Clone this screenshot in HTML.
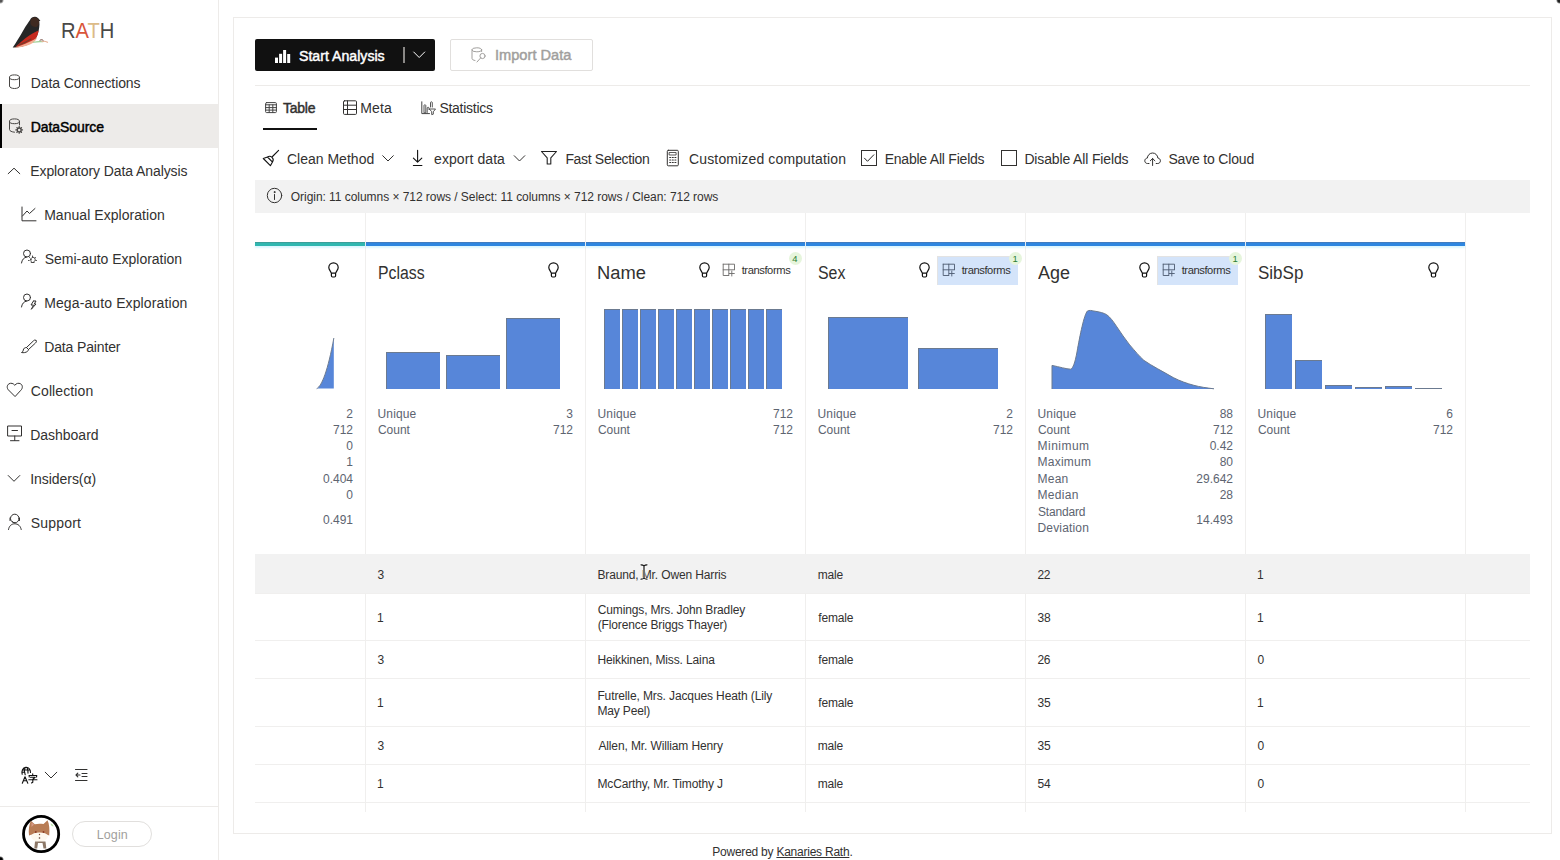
<!DOCTYPE html>
<html><head><meta charset="utf-8"><title>RATH</title>
<style>
html,body{margin:0;padding:0;width:1560px;height:860px;overflow:hidden;background:#fff;}
body{position:relative;font-family:"Liberation Sans",sans-serif;}
.t{position:absolute;line-height:1;white-space:nowrap;}
.r{position:absolute;box-sizing:content-box;}
svg.r{display:block}
</style></head><body>
<div class="r" style="left:-3px;top:-3px;width:7px;height:7px;border-radius:50%;background:radial-gradient(circle,#555 0,#555 30%,rgba(85,85,85,0) 70%);"></div>
<div class="r" style="left:1556px;top:-3px;width:7px;height:7px;border-radius:50%;background:radial-gradient(circle,#222 0,#222 35%,rgba(34,34,34,0) 70%);"></div>
<div class="r" style="left:-3px;top:856px;width:7px;height:7px;border-radius:50%;background:radial-gradient(circle,#000 0,#000 35%,rgba(0,0,0,0) 70%);"></div>
<div class="r" style="left:218px;top:0px;width:1px;height:860px;background:#edebe9;"></div>
<svg class="r" style="left:0px;top:0px;overflow:visible;" width="60" height="60" viewBox="0.00 0.00 60 60" fill="none" stroke="#323130" stroke-width="1" stroke-linecap="round" stroke-linejoin="round">
<path d="M12.7 47.5 C16 43 20 36 23.5 30 C26.5 25 28.5 22 30 20 C31 17.8 33 16.7 35 16.8 C37 17 38.5 18 39.2 19.6 L40.4 20.6 L39.2 21.3 C39.6 23.3 39.6 25.5 39.2 27.5 C38.7 31 37.8 35 35.8 38.5 C33 42.5 28 45.2 22 46.6 C18 47.4 15 47.6 12.7 47.5 Z" fill="#262626" stroke="none"/>
<path d="M30.5 20.5 C31.5 18 33.5 17.2 35.5 17.4 C37.5 17.8 38.8 19 39 21 C39.5 23.5 38.5 26 36.5 27 C34 27.5 31.5 26 30.5 24 Z" fill="#3f2a20" stroke="none"/>
<path d="M15.5 46.8 C19 43.5 24 39 30 35 C33.5 32.8 36.5 31.3 38.6 30.6 C38.2 33.8 37.2 36.5 35.6 38.7 C32.5 42.5 27.5 45.2 21 46.7 Z" fill="#c62a1f" stroke="none"/>
<path d="M14 47.6 C19 46.5 24 44.5 29 42 C33 40 36 38.5 37.2 37.2 C36.5 40 34 42.5 30 44.5 C25.5 46.5 20 47.6 14 47.6 Z" fill="#f3ae93" stroke="none"/>
<path d="M19 45 C24 43 28 41 31 39" stroke="#7a3a2a" stroke-width="1.2"/>
<path d="M33.5 42.3 C37 41.6 40 41.4 43 41.8" stroke="#9ccf95" stroke-width="1.1"/>
<path d="M42 41.5 C44 41 46 41.4 47.5 42.3" stroke="#e9b59a" stroke-width="1.2"/>
<path d="M40 40.2 C41 39.5 42.5 39.6 43.2 40.4" stroke="#6a3a30" stroke-width="1"/>
</svg>
<div class="t" style="left:61.26px;top:21.25px;font-size:21.5px;color:#323130;transform:scaleX(0.9368);transform-origin:0 0;"><span style="color:#4a4948">R</span><span style="color:#d9553a">A</span><span style="color:#dcbb88">T</span><span style="color:#4a4948">H</span></div>
<div class="r" style="left:0px;top:104px;width:218px;height:44px;background:#edebe9;"></div>
<div class="r" style="left:0px;top:104px;width:2px;height:44px;background:#000;"></div>
<div class="t" style="left:30.68px;top:76.00px;font-size:14px;color:#323130;letter-spacing:-0.095px;">Data Connections</div>
<div class="t" style="left:30.27px;top:164.00px;font-size:14px;color:#323130;letter-spacing:-0.095px;">Exploratory Data Analysis</div>
<div class="t" style="left:44.17px;top:208.00px;font-size:14px;color:#323130;letter-spacing:0.049px;">Manual Exploration</div>
<div class="t" style="left:44.67px;top:252.00px;font-size:14px;color:#323130;letter-spacing:-0.013px;">Semi-auto Exploration</div>
<div class="t" style="left:44.17px;top:296.00px;font-size:14px;color:#323130;letter-spacing:0.116px;">Mega-auto Exploration</div>
<div class="t" style="left:44.17px;top:340.00px;font-size:14px;color:#323130;letter-spacing:-0.136px;">Data Painter</div>
<div class="t" style="left:30.77px;top:384.00px;font-size:14px;color:#323130;letter-spacing:0.111px;">Collection</div>
<div class="t" style="left:30.27px;top:428.00px;font-size:14px;color:#323130;letter-spacing:-0.025px;">Dashboard</div>
<div class="t" style="left:30.15px;top:472.00px;font-size:14px;color:#323130;letter-spacing:-0.037px;">Insiders(α)</div>
<div class="t" style="left:30.77px;top:516.00px;font-size:14px;color:#323130;letter-spacing:0.188px;">Support</div>
<div class="t" style="left:30.68px;top:120.00px;font-size:14px;color:#000;-webkit-text-stroke:0.45px #000;letter-spacing:-0.061px;">DataSource</div>
<svg class="r" style="left:9px;top:74px;overflow:visible;" width="12" height="15" viewBox="0.00 0.00 12 15" fill="none" stroke="#484644" stroke-width="1" stroke-linecap="round" stroke-linejoin="round"><ellipse cx="5.5" cy="3.3" rx="5" ry="2.4"/><path d="M0.5 3.3 V12 C0.5 13.5 2.8 14.5 5.5 14.5 C8.2 14.5 10.5 13.5 10.5 12 V3.3"/></svg>
<svg class="r" style="left:9px;top:118px;overflow:visible;" width="15" height="16" viewBox="0.00 0.00 15 16" fill="none" stroke="#484644" stroke-width="1" stroke-linecap="round" stroke-linejoin="round"><ellipse cx="5.5" cy="3.3" rx="5" ry="2.4"/><path d="M0.5 3.3 V11.5 C0.5 13 2.8 14 5.5 14.2 M10.5 3.3 V7"/><circle cx="10.2" cy="11.9" r="1.9" stroke-width="1.3"/><path d="M10.2 8.6 V9.4 M10.2 14.4 V15.2 M6.9 11.9 H7.7 M12.7 11.9 H13.5 M7.9 9.6 L8.4 10.1 M12 13.7 L12.5 14.2 M12.5 9.6 L12 10.1 M8.4 13.7 L7.9 14.2" stroke-width="1.3"/></svg>
<svg class="r" style="left:7px;top:167px;overflow:visible;" width="14" height="8" viewBox="-0.50 0.00 14 8" fill="none" stroke="#323130" stroke-width="1" stroke-linecap="round" stroke-linejoin="round"><path d="M0.7 6.7 L6.5 1.2 L12.3 6.7"/></svg>
<svg class="r" style="left:21px;top:206px;overflow:visible;" width="16" height="15" viewBox="0.00 -0.50 16 15" fill="none" stroke="#323130" stroke-width="1" stroke-linecap="round" stroke-linejoin="round"><path d="M1 0.5 V14.3 H15"/><path d="M1.5 9.5 L6 4.5 L8.5 7 L14 2"/></svg>
<svg class="r" style="left:20px;top:249px;overflow:visible;" width="18" height="16" viewBox="-0.50 -0.50 18 16" fill="none" stroke="#323130" stroke-width="1" stroke-linecap="round" stroke-linejoin="round"><circle cx="6.5" cy="4" r="3.5"/><path d="M1 13.5 C1.5 10 3.5 8 6 7.6"/><path d="M10.3 10 a2.2 2.2 0 1 1 3.4 1.8 V13 h-3 v-1.2 a2.2 2.2 0 0 1 -0.4 -1.8z M12 6.5 v0.8 M9 8 l0.5 0.5 M15 8 l-0.5 0.5 M8 11 h0.7 M15.3 11 h0.7" stroke-width="0.9"/></svg>
<svg class="r" style="left:20px;top:293px;overflow:visible;" width="18" height="18" viewBox="-0.50 -0.50 18 18" fill="none" stroke="#323130" stroke-width="1" stroke-linecap="round" stroke-linejoin="round"><circle cx="6.5" cy="4" r="3.5"/><path d="M1 13.5 C1.5 10 3.5 8 6 7.6"/><path d="M13 7.5 L10.5 11.5 H13 L11 15.5 M13 7.5 H15.5 L13.8 10.5 H15.5 L11 15.5" stroke-width="1"/></svg>
<svg class="r" style="left:20px;top:339px;overflow:visible;" width="17" height="15" viewBox="-0.50 0.00 17 15" fill="none" stroke="#323130" stroke-width="1" stroke-linecap="round" stroke-linejoin="round"><path d="M15.5 1.5 C16.3 2.3 16 3 15 4 L8 10.5 L6 8.5 L13 1.8 C14 0.8 14.8 0.8 15.5 1.5Z"/><path d="M6 8.5 C4 8.5 3 9.5 2.8 11 C2.6 12.5 1.8 13.2 1 13.5 C3 14 5.5 13.5 6.8 12.5 C7.8 11.7 8 11 8 10.5"/></svg>
<svg class="r" style="left:6px;top:382px;overflow:visible;" width="17" height="15" viewBox="-0.50 -0.50 17 15" fill="none" stroke="#323130" stroke-width="1" stroke-linecap="round" stroke-linejoin="round"><path d="M8.3 13.8 L2 7.5 C0 5.5 0.5 2.5 2.5 1.3 C4.5 0.2 6.8 0.8 8.3 2.8 C9.8 0.8 12.1 0.2 14.1 1.3 C16.1 2.5 16.6 5.5 14.6 7.5 Z"/></svg>
<svg class="r" style="left:7px;top:425px;overflow:visible;" width="16" height="16" viewBox="0.00 -0.50 16 16" fill="none" stroke="#323130" stroke-width="1" stroke-linecap="round" stroke-linejoin="round"><rect x="1" y="0.5" width="13.5" height="10"/><path d="M5 5 H10.5 M7.75 10.5 V15 M3.5 15.2 H12"/></svg>
<svg class="r" style="left:7px;top:474px;overflow:visible;" width="14" height="8" viewBox="-0.50 -0.50 14 8" fill="none" stroke="#323130" stroke-width="1" stroke-linecap="round" stroke-linejoin="round"><path d="M0.7 1 L6.5 6.8 L12.3 1"/></svg>
<svg class="r" style="left:7px;top:512px;overflow:visible;" width="16" height="18" viewBox="-0.50 -0.50 16 18" fill="none" stroke="#323130" stroke-width="1" stroke-linecap="round" stroke-linejoin="round"><circle cx="7.3" cy="6" r="4.3"/><path d="M2.5 5.5 V8 M12 5.5 V8 M7 10.2 C5.5 10.2 5 9.5 5 9"/><path d="M1 17 C1.5 13.5 4 11.3 7.3 11.3 C10.6 11.3 13.1 13.5 13.7 17"/></svg>
<svg class="r" style="left:20px;top:766px;overflow:visible;" width="18" height="18" viewBox="0.00 0.00 18 18" fill="none" stroke="#323130" stroke-width="1" stroke-linecap="round" stroke-linejoin="round"><path d="M2.2 8.3 C1.3 5 2.7 1.8 5.8 1.4 C8.9 1.1 10.6 3.6 10.5 6.5 M2.3 4 H10 M5 1.8 C4.2 3.5 4.2 6 5.2 8.8 M7 1.6 C8 3.3 8.3 5.2 8 7.2 M2 6.2 H4.8" stroke-width="1.1" stroke="#111"/><path d="M2.3 17.3 L5 10.8 L7.8 17.3 M3.4 14.8 H6.8" stroke-width="1.1" stroke="#111"/><path d="M9 9.5 H16.8 M12.7 7.8 V9.5 M9.2 9.5 V11 M16.6 9.5 V11 M10.5 11.3 H15.2 L12.8 13.2 V16.2 L11.5 17 M8.8 13.8 H17" stroke-width="1.1" stroke="#111"/></svg>
<svg class="r" style="left:44px;top:771px;overflow:visible;" width="14" height="8" viewBox="0.00 0.00 14 8" fill="none" stroke="#323130" stroke-width="1" stroke-linecap="round" stroke-linejoin="round"><path d="M1.2 1.2 L7 7 L12.8 1.2"/></svg>
<svg class="r" style="left:74px;top:768px;overflow:visible;" width="14" height="14" viewBox="0.00 0.00 14 14" fill="none" stroke="#323130" stroke-width="1" stroke-linecap="round" stroke-linejoin="round"><path d="M1.5 1.5 H13 M1.5 12.5 H13 M8 5.5 H13 M8 8.5 H13 M2 7 H6 M3.8 5.2 L2 7 L3.8 8.8" stroke-width="1.1"/></svg>
<div class="r" style="left:0px;top:806px;width:218px;height:1px;background:#edebe9;"></div>
<svg class="r" style="left:21px;top:814px;overflow:visible;" width="40" height="40" viewBox="0.00 0.00 40 40" fill="none" stroke="#323130" stroke-width="1" stroke-linecap="round" stroke-linejoin="round">
<circle cx="20.1" cy="20" r="17.6" fill="#fff" stroke="#000" stroke-width="2.8"/>
<path d="M8 21.5 C7.3 16 8.2 11 9.8 6.8 L13.8 10.2 C16.5 9.5 19.5 9.5 22.5 10 L26.5 6.2 C28.3 10 28.8 15 28.2 21.5 C26 20.5 23 19.5 18.5 19.5 C14 19.5 10.5 20.5 8 21.5 Z" fill="#b87c55" stroke="none"/>
<path d="M10.5 8.5 L13 10.5 L10.5 13Z" fill="#d99a8a" stroke="none"/>
<path d="M10 22 C11 19.5 14 18.5 18.5 18.5 C23 18.5 26 19.5 27 22 C26.5 25.5 23 27.5 18.5 27.5 C14 27.5 10.5 25.5 10 22 Z" fill="#fdf8ee" stroke="none"/>
<circle cx="14.8" cy="18" r="0.9" fill="#8a3a25" stroke="none"/>
<circle cx="22.5" cy="18" r="0.9" fill="#8a3a25" stroke="none"/>
<circle cx="18.5" cy="20.5" r="0.7" fill="#7a4a35" stroke="none"/>
<circle cx="18.5" cy="24" r="0.8" fill="#5a3a30" stroke="none"/>
<path d="M14 27.5 L13.3 34.5 H16.2 L17 29 H21.5 L22.5 34.5 H25.3 L24.5 27.5 Z" fill="#8c7868" stroke="none"/>
<path d="M29.5 9.5 C31 9.5 32.5 11 32.5 12.5 C31 12.5 29.8 11.2 29.5 9.5Z" fill="#b9e3a8" stroke="none"/>
</svg>
<div class="r" style="left:72px;top:821px;width:78px;height:24px;border:1px solid #e1dfdd;border-radius:13px;"></div>
<div class="t" style="left:96.70px;top:828.75px;font-size:12.5px;color:#a19f9d;letter-spacing:0.138px;">Login</div>
<div class="r" style="left:233px;top:17px;width:1317px;height:815px;border:1px solid #edebe9;"></div>
<div class="r" style="left:255px;top:39px;width:180px;height:32px;background:#111111;border-radius:2px;"></div>
<svg class="r" style="left:275px;top:49px;overflow:visible;" width="16" height="15" viewBox="0.00 0.00 16 15" fill="none" stroke="#323130" stroke-width="1" stroke-linecap="round" stroke-linejoin="round"><rect x="0" y="8.6" width="3" height="5.4" fill="#fff" stroke="none"/><rect x="4.1" y="4.8" width="3" height="9.2" fill="#fff" stroke="none"/><rect x="8.1" y="1" width="3" height="13" fill="#fff" stroke="none"/><rect x="12.2" y="5" width="3" height="9" fill="#fff" stroke="none"/></svg>
<div class="t" style="left:298.77px;top:49.00px;font-size:14px;color:#fff;-webkit-text-stroke:0.45px #fff;transform:scaleX(1.0101);transform-origin:0 0;">Start Analysis</div>
<div class="r" style="left:403px;top:47px;width:2px;height:16px;background:#8a8886;"></div>
<svg class="r" style="left:413px;top:51px;overflow:visible;" width="14" height="8" viewBox="0.00 0.00 14 8" fill="none" stroke="#323130" stroke-width="1" stroke-linecap="round" stroke-linejoin="round"><path d="M0.7 1 L6.2 6.5 L11.7 1" stroke="#fff"/></svg>
<div class="r" style="left:450px;top:39px;width:141px;height:30px;border:1px solid #e1dfdd;border-radius:2px;"></div>
<svg class="r" style="left:471px;top:47px;overflow:visible;" width="16" height="17" viewBox="-0.50 0.00 16 17" fill="none" stroke="#a19f9d" stroke-width="1" stroke-linecap="round" stroke-linejoin="round"><ellipse cx="5.3" cy="2.8" rx="4.8" ry="2"/><path d="M0.5 2.8 V11.5 C0.5 12.5 2 13.3 3.5 13.5 M10.1 2.8 V4.5"/><circle cx="11" cy="9" r="2.6"/><path d="M9.2 10.9 L5.5 15"/></svg>
<div class="t" style="left:494.69px;top:48.00px;font-size:14px;color:#a19f9d;-webkit-text-stroke:0.45px #a19f9d;transform:scaleX(1.0444);transform-origin:0 0;">Import Data</div>
<div class="r" style="left:255px;top:85px;width:1275px;height:1px;background:#edebe9;"></div>
<svg class="r" style="left:265px;top:102px;overflow:visible;" width="12" height="11" viewBox="0.00 0.00 12 11" fill="none" stroke="#444" stroke-width="1" stroke-linecap="round" stroke-linejoin="round"><rect x="0.6" y="0.6" width="10.8" height="10" rx="1"/><path d="M0.6 2.8 H11.4 M0.6 5.6 H11.4 M0.6 8.1 H11.4 M4.2 2.8 V10.6 M7.8 2.8 V10.6" stroke-width="1"/></svg>
<div class="t" style="left:283.05px;top:101.00px;font-size:14px;color:#323130;-webkit-text-stroke:0.45px #323130;letter-spacing:-0.263px;">Table</div>
<div class="r" style="left:263px;top:128px;width:54px;height:2px;background:#111;"></div>
<svg class="r" style="left:343px;top:100px;overflow:visible;" width="15" height="15" viewBox="0.00 0.00 15 15" fill="none" stroke="#323130" stroke-width="1" stroke-linecap="round" stroke-linejoin="round"><rect x="0.5" y="0.8" width="13" height="13.6" rx="1"/><path d="M0.5 5.2 H13.5 M0.5 9.5 H13.5 M4.5 0.8 V14.4"/></svg>
<div class="t" style="left:360.18px;top:101.00px;font-size:14px;color:#323130;letter-spacing:0.192px;">Meta</div>
<svg class="r" style="left:421px;top:101px;overflow:visible;" width="16" height="15" viewBox="0.00 0.00 16 15" fill="none" stroke="#444" stroke-width="1" stroke-linecap="round" stroke-linejoin="round"><path d="M0.8 0.8 V12.6 H8.5"/><path d="M3 11.5 V4.5 C3 3.5 4.8 3.5 4.8 4.5 V11.5 Z M6.2 11.5 V7 C6.2 6 8 6 8 7 V8.5 M9.5 6 V1.5 C9.5 0.6 11.3 0.6 11.3 1.5 V6" stroke-width="0.9"/><path d="M8.5 8 H14.5 L12.3 10.8 V13.2 L10.7 13.6 V10.8 Z" stroke-width="0.9"/></svg>
<div class="t" style="left:439.38px;top:101.00px;font-size:14px;color:#323130;letter-spacing:-0.264px;">Statistics</div>
<svg class="r" style="left:262px;top:149px;overflow:visible;" width="18" height="18" viewBox="0.00 0.00 18 18" fill="none" stroke="#323130" stroke-width="1" stroke-linecap="round" stroke-linejoin="round"><path d="M1.3 9.5 L5.5 8 A3.6 3.6 0 0 1 10.5 13 L8.4 16.7 Z M5.5 8 L10.3 12.8 M10.5 7.5 L16.6 1.4" stroke="#111" stroke-width="1.1"/></svg>
<div class="t" style="left:286.88px;top:152.00px;font-size:14px;color:#323130;letter-spacing:0.016px;">Clean Method</div>
<svg class="r" style="left:382px;top:155px;overflow:visible;" width="13" height="8" viewBox="0.00 0.00 13 8" fill="none" stroke="#323130" stroke-width="1" stroke-linecap="round" stroke-linejoin="round"><path d="M0.7 0.7 L6 6 L11.3 0.7"/></svg>
<svg class="r" style="left:412px;top:149px;overflow:visible;" width="12" height="18" viewBox="0.00 0.00 12 18" fill="none" stroke="#323130" stroke-width="1" stroke-linecap="round" stroke-linejoin="round"><path d="M5.6 1.2 V13 M1.4 9.2 L5.6 13.2 L9.8 9.2 M1.4 16.5 H9.9" stroke="#111" stroke-width="1.1"/></svg>
<div class="t" style="left:434.07px;top:152.00px;font-size:14px;color:#323130;letter-spacing:0.080px;">export data</div>
<svg class="r" style="left:513px;top:155px;overflow:visible;" width="13" height="8" viewBox="-0.50 0.00 13 8" fill="none" stroke="#323130" stroke-width="1" stroke-linecap="round" stroke-linejoin="round"><path d="M0.7 0.7 L6 6 L11.3 0.7"/></svg>
<svg class="r" style="left:540px;top:150px;overflow:visible;" width="18" height="17" viewBox="0.00 0.00 18 17" fill="none" stroke="#323130" stroke-width="1" stroke-linecap="round" stroke-linejoin="round"><path d="M1.5 1.5 H16.5 L10.8 7.8 V14 H7.2 V7.8 Z" stroke="#222" stroke-width="1.1"/></svg>
<div class="t" style="left:565.38px;top:152.00px;font-size:14px;color:#323130;letter-spacing:-0.325px;">Fast Selection</div>
<svg class="r" style="left:666px;top:149px;overflow:visible;" width="13" height="17" viewBox="-0.50 -0.50 13 17" fill="none" stroke="#323130" stroke-width="1" stroke-linecap="round" stroke-linejoin="round"><rect x="0.8" y="0.8" width="11" height="15.5" rx="1"/><rect x="3" y="3" width="6.6" height="2.5" stroke-width="0.8"/><path d="M3.2 8 h1 M5.8 8 h1 M8.4 8 h1 M3.2 10.5 h1 M5.8 10.5 h1 M8.4 10.5 h1 M3.2 13 h1 M5.8 13 h1 M8.4 13 h1" stroke-width="1.1"/></svg>
<div class="t" style="left:689.08px;top:152.00px;font-size:14px;color:#323130;letter-spacing:0.133px;">Customized computation</div>
<svg class="r" style="left:861px;top:150px;overflow:visible;" width="17" height="17" viewBox="0.00 0.00 17 17" fill="none" stroke="#323130" stroke-width="1" stroke-linecap="round" stroke-linejoin="round"><rect x="0.5" y="0.5" width="15" height="15" stroke-linejoin="miter"/><path d="M3.5 8.2 L6.5 11.3 L12.8 4.8" stroke="#222"/></svg>
<div class="t" style="left:884.67px;top:152.00px;font-size:14px;color:#323130;letter-spacing:-0.223px;">Enable All Fields</div>
<svg class="r" style="left:1001px;top:150px;overflow:visible;" width="17" height="17" viewBox="0.00 0.00 17 17" fill="none" stroke="#323130" stroke-width="1" stroke-linecap="round" stroke-linejoin="round"><rect x="0.5" y="0.5" width="15" height="15" stroke-linejoin="miter"/></svg>
<div class="t" style="left:1024.38px;top:152.00px;font-size:14px;color:#323130;letter-spacing:-0.141px;">Disable All Fields</div>
<svg class="r" style="left:1144px;top:151px;overflow:visible;" width="18" height="15" viewBox="0.00 0.00 18 15" fill="none" stroke="#323130" stroke-width="1" stroke-linecap="round" stroke-linejoin="round"><path d="M5 12.5 H3.5 C1.8 12.5 0.8 11.3 0.8 9.8 C0.8 8.3 1.9 7.2 3.3 7.1 C3.6 4.2 5.8 2 8.6 2 C11.4 2 13.6 4.2 13.9 7.1 C15.3 7.2 16.4 8.3 16.4 9.8 C16.4 11.3 15.4 12.5 13.7 12.5 H12.2"/><path d="M8.6 14.5 V7.5 M6.3 9.8 L8.6 7.5 L10.9 9.8"/></svg>
<div class="t" style="left:1168.38px;top:152.00px;font-size:14px;color:#323130;letter-spacing:-0.173px;">Save to Cloud</div>
<div class="r" style="left:255px;top:180px;width:1275px;height:33px;background:#f2f2f2;"></div>
<svg class="r" style="left:266px;top:187px;overflow:visible;" width="17" height="17" viewBox="-0.50 -0.50 17 17" fill="none" stroke="#323130" stroke-width="1" stroke-linecap="round" stroke-linejoin="round"><circle cx="8" cy="8" r="7.2"/><path d="M8 7 V12"/><circle cx="8" cy="4.6" r="0.5" fill="#323130"/></svg>
<div class="t" style="left:290.80px;top:191.00px;font-size:12px;color:#323130;letter-spacing:-0.046px;">Origin: 11 columns × 712 rows / Select: 11 columns × 712 rows / Clean: 712 rows</div>
<div class="r" style="left:365px;top:213px;width:1px;height:599px;background:#f0efee;"></div>
<div class="r" style="left:585px;top:213px;width:1px;height:599px;background:#f0efee;"></div>
<div class="r" style="left:805px;top:213px;width:1px;height:599px;background:#f0efee;"></div>
<div class="r" style="left:1025px;top:213px;width:1px;height:599px;background:#f0efee;"></div>
<div class="r" style="left:1245px;top:213px;width:1px;height:599px;background:#f0efee;"></div>
<div class="r" style="left:1465px;top:213px;width:1px;height:599px;background:#f0efee;"></div>
<div class="r" style="left:255px;top:242px;width:110px;height:4px;background:#2fb7b0;box-shadow:inset 0 1px 0 #3a9e9a,0 2px 2px rgba(150,230,255,0.35);"></div>
<div class="r" style="left:366px;top:242px;width:219px;height:4px;background:#2d86e0;box-shadow:inset 0 1px 0 #3f7cc0,0 2px 2px rgba(150,230,255,0.35);"></div>
<div class="r" style="left:586px;top:242px;width:219px;height:4px;background:#2d86e0;box-shadow:inset 0 1px 0 #3f7cc0,0 2px 2px rgba(150,230,255,0.35);"></div>
<div class="r" style="left:806px;top:242px;width:219px;height:4px;background:#2d86e0;box-shadow:inset 0 1px 0 #3f7cc0,0 2px 2px rgba(150,230,255,0.35);"></div>
<div class="r" style="left:1026px;top:242px;width:219px;height:4px;background:#2d86e0;box-shadow:inset 0 1px 0 #3f7cc0,0 2px 2px rgba(150,230,255,0.35);"></div>
<div class="r" style="left:1246px;top:242px;width:219px;height:4px;background:#2d86e0;box-shadow:inset 0 1px 0 #3f7cc0,0 2px 2px rgba(150,230,255,0.35);"></div>
<svg class="r" style="left:328px;top:262px;overflow:visible;" width="11" height="16" viewBox="0.00 0.00 11 16" fill="none" stroke="#323130" stroke-width="1" stroke-linecap="round" stroke-linejoin="round"><path d="M5.5 0.8 C2.8 0.8 0.8 2.9 0.8 5.4 C0.8 7.7 2.8 9.2 3.3 11.2 H7.7 C8.2 9.2 10.2 7.7 10.2 5.4 C10.2 2.9 8.2 0.8 5.5 0.8 Z M3.4 11.5 V13.8 C3.4 14.6 4 15 4.6 15 H6.4 C7 15 7.6 14.6 7.6 13.8 V11.5" stroke="#111" stroke-width="1.2"/></svg>
<div class="t" style="left:378.18px;top:264.00px;font-size:18px;color:#323130;transform:scaleX(0.8786);transform-origin:0 0;">Pclass</div>
<div class="t" style="left:596.77px;top:264.00px;font-size:18px;color:#323130;transform:scaleX(1.0186);transform-origin:0 0;">Name</div>
<div class="t" style="left:817.64px;top:264.00px;font-size:18px;color:#323130;transform:scaleX(0.8833);transform-origin:0 0;">Sex</div>
<div class="t" style="left:1038.30px;top:264.00px;font-size:18px;color:#323130;transform:scaleX(0.9984);transform-origin:0 0;">Age</div>
<div class="t" style="left:1257.59px;top:264.00px;font-size:18px;color:#323130;transform:scaleX(0.9441);transform-origin:0 0;">SibSp</div>
<svg class="r" style="left:548px;top:262px;overflow:visible;" width="11" height="16" viewBox="0.00 0.00 11 16" fill="none" stroke="#323130" stroke-width="1" stroke-linecap="round" stroke-linejoin="round"><path d="M5.5 0.8 C2.8 0.8 0.8 2.9 0.8 5.4 C0.8 7.7 2.8 9.2 3.3 11.2 H7.7 C8.2 9.2 10.2 7.7 10.2 5.4 C10.2 2.9 8.2 0.8 5.5 0.8 Z M3.4 11.5 V13.8 C3.4 14.6 4 15 4.6 15 H6.4 C7 15 7.6 14.6 7.6 13.8 V11.5" stroke="#111" stroke-width="1.2"/></svg>
<svg class="r" style="left:699px;top:262px;overflow:visible;" width="11" height="16" viewBox="0.00 0.00 11 16" fill="none" stroke="#323130" stroke-width="1" stroke-linecap="round" stroke-linejoin="round"><path d="M5.5 0.8 C2.8 0.8 0.8 2.9 0.8 5.4 C0.8 7.7 2.8 9.2 3.3 11.2 H7.7 C8.2 9.2 10.2 7.7 10.2 5.4 C10.2 2.9 8.2 0.8 5.5 0.8 Z M3.4 11.5 V13.8 C3.4 14.6 4 15 4.6 15 H6.4 C7 15 7.6 14.6 7.6 13.8 V11.5" stroke="#111" stroke-width="1.2"/></svg>
<svg class="r" style="left:919px;top:262px;overflow:visible;" width="11" height="16" viewBox="0.00 0.00 11 16" fill="none" stroke="#323130" stroke-width="1" stroke-linecap="round" stroke-linejoin="round"><path d="M5.5 0.8 C2.8 0.8 0.8 2.9 0.8 5.4 C0.8 7.7 2.8 9.2 3.3 11.2 H7.7 C8.2 9.2 10.2 7.7 10.2 5.4 C10.2 2.9 8.2 0.8 5.5 0.8 Z M3.4 11.5 V13.8 C3.4 14.6 4 15 4.6 15 H6.4 C7 15 7.6 14.6 7.6 13.8 V11.5" stroke="#111" stroke-width="1.2"/></svg>
<svg class="r" style="left:1139px;top:262px;overflow:visible;" width="11" height="16" viewBox="0.00 0.00 11 16" fill="none" stroke="#323130" stroke-width="1" stroke-linecap="round" stroke-linejoin="round"><path d="M5.5 0.8 C2.8 0.8 0.8 2.9 0.8 5.4 C0.8 7.7 2.8 9.2 3.3 11.2 H7.7 C8.2 9.2 10.2 7.7 10.2 5.4 C10.2 2.9 8.2 0.8 5.5 0.8 Z M3.4 11.5 V13.8 C3.4 14.6 4 15 4.6 15 H6.4 C7 15 7.6 14.6 7.6 13.8 V11.5" stroke="#111" stroke-width="1.2"/></svg>
<svg class="r" style="left:1428px;top:262px;overflow:visible;" width="11" height="16" viewBox="0.00 0.00 11 16" fill="none" stroke="#323130" stroke-width="1" stroke-linecap="round" stroke-linejoin="round"><path d="M5.5 0.8 C2.8 0.8 0.8 2.9 0.8 5.4 C0.8 7.7 2.8 9.2 3.3 11.2 H7.7 C8.2 9.2 10.2 7.7 10.2 5.4 C10.2 2.9 8.2 0.8 5.5 0.8 Z M3.4 11.5 V13.8 C3.4 14.6 4 15 4.6 15 H6.4 C7 15 7.6 14.6 7.6 13.8 V11.5" stroke="#111" stroke-width="1.2"/></svg>
<svg class="r" style="left:722px;top:263px;overflow:visible;" width="13" height="13" viewBox="-0.50 -0.50 13 13" fill="none" stroke="#6b6a69" stroke-width="1" stroke-linecap="round" stroke-linejoin="round"><path d="M0.7 0.7 H12 V6 M0.7 0.7 V12 H6 M0.7 6.3 H12 M6.3 0.7 V12 M9.3 7.5 V12.5 M6.8 10 H11.8" stroke-width="0.9"/></svg>
<div class="t" style="left:741.67px;top:265.40px;font-size:11.2px;color:#323130;letter-spacing:-0.419px;">transforms</div>
<div class="r" style="left:789px;top:251.5px;width:13px;height:13px;border-radius:50%;background:#e6f5dc;"></div>
<div class="t" style="left:792.30px;top:253.75px;font-size:9.5px;color:#2e7d32;">4</div>
<div class="r" style="left:937px;top:256px;width:81px;height:29px;background:#d4e4fa;box-shadow:inset 1px 1px 0 #e3e3e3;"></div>
<svg class="r" style="left:942px;top:263px;overflow:visible;" width="13" height="13" viewBox="-0.50 -0.50 13 13" fill="none" stroke="#4d5a70" stroke-width="1" stroke-linecap="round" stroke-linejoin="round"><path d="M0.7 0.7 H12 V6 M0.7 0.7 V12 H6 M0.7 6.3 H12 M6.3 0.7 V12 M9.3 7.5 V12.5 M6.8 10 H11.8" stroke-width="0.9"/></svg>
<div class="t" style="left:961.67px;top:265.40px;font-size:11.2px;color:#323130;letter-spacing:-0.419px;">transforms</div>
<div class="r" style="left:1009px;top:251.5px;width:13px;height:13px;border-radius:50%;background:#e6f5dc;"></div>
<div class="t" style="left:1012.50px;top:253.75px;font-size:9.5px;color:#2e7d32;">1</div>
<div class="r" style="left:1157px;top:256px;width:81px;height:29px;background:#d4e4fa;box-shadow:inset 1px 1px 0 #e3e3e3;"></div>
<svg class="r" style="left:1162px;top:263px;overflow:visible;" width="13" height="13" viewBox="-0.50 -0.50 13 13" fill="none" stroke="#4d5a70" stroke-width="1" stroke-linecap="round" stroke-linejoin="round"><path d="M0.7 0.7 H12 V6 M0.7 0.7 V12 H6 M0.7 6.3 H12 M6.3 0.7 V12 M9.3 7.5 V12.5 M6.8 10 H11.8" stroke-width="0.9"/></svg>
<div class="t" style="left:1181.67px;top:265.40px;font-size:11.2px;color:#323130;letter-spacing:-0.419px;">transforms</div>
<div class="r" style="left:1229px;top:251.5px;width:13px;height:13px;border-radius:50%;background:#e6f5dc;"></div>
<div class="t" style="left:1232.50px;top:253.75px;font-size:9.5px;color:#2e7d32;">1</div>
<svg class="r" style="left:300px;top:330px;overflow:visible;" width="40" height="62" viewBox="0.00 0.00 40 62" fill="none" stroke="#323130" stroke-width="1" stroke-linecap="round" stroke-linejoin="round"><path d="M17 58.5 C22 56 28 40 33.8 8.4 V58.5 Z" fill="#5786d9" stroke="none"/><path d="M17 58.5 C22 56 28 40 33.8 8.4" stroke="#6b7a90" stroke-width="1"/></svg>
<div class="r" style="left:386px;top:352px;width:54px;height:37px;background:#5786d9;box-shadow:inset 1px 1px 0 #6b7a90;"></div>
<div class="r" style="left:446px;top:354.5px;width:54px;height:34.5px;background:#5786d9;box-shadow:inset 1px 1px 0 #6b7a90;"></div>
<div class="r" style="left:506px;top:318px;width:54px;height:71px;background:#5786d9;box-shadow:inset 1px 1px 0 #6b7a90;"></div>
<div class="r" style="left:604px;top:309px;width:16px;height:80px;background:#5786d9;box-shadow:inset 1px 1px 0 #6b7a90;"></div>
<div class="r" style="left:622px;top:309px;width:16px;height:80px;background:#5786d9;box-shadow:inset 1px 1px 0 #6b7a90;"></div>
<div class="r" style="left:640px;top:309px;width:16px;height:80px;background:#5786d9;box-shadow:inset 1px 1px 0 #6b7a90;"></div>
<div class="r" style="left:658px;top:309px;width:16px;height:80px;background:#5786d9;box-shadow:inset 1px 1px 0 #6b7a90;"></div>
<div class="r" style="left:676px;top:309px;width:16px;height:80px;background:#5786d9;box-shadow:inset 1px 1px 0 #6b7a90;"></div>
<div class="r" style="left:694px;top:309px;width:16px;height:80px;background:#5786d9;box-shadow:inset 1px 1px 0 #6b7a90;"></div>
<div class="r" style="left:712px;top:309px;width:16px;height:80px;background:#5786d9;box-shadow:inset 1px 1px 0 #6b7a90;"></div>
<div class="r" style="left:730px;top:309px;width:16px;height:80px;background:#5786d9;box-shadow:inset 1px 1px 0 #6b7a90;"></div>
<div class="r" style="left:748px;top:309px;width:16px;height:80px;background:#5786d9;box-shadow:inset 1px 1px 0 #6b7a90;"></div>
<div class="r" style="left:766px;top:309px;width:16px;height:80px;background:#5786d9;box-shadow:inset 1px 1px 0 #6b7a90;"></div>
<div class="r" style="left:828px;top:317px;width:80.29999999999995px;height:72px;background:#5786d9;box-shadow:inset 1px 1px 0 #6b7a90;"></div>
<div class="r" style="left:918px;top:348px;width:80.29999999999995px;height:41px;background:#5786d9;box-shadow:inset 1px 1px 0 #6b7a90;"></div>
<svg class="r" style="left:0;top:0" width="1560" height="860"><path d="M1052 389 L1052 365.4 C1060 367 1066 369 1070.8 369.2 C1073 368 1075 363 1077 352 C1080 335 1084 315 1087.4 311 C1089 310 1092 310.5 1093.8 311 C1100 312 1104 313 1106.7 314.7 C1110 317 1113 321 1116.9 326.9 C1121 333 1125 339 1129.7 344.9 C1135 351 1139 356 1143.8 360.3 C1152 366 1162 371 1173.3 377.6 C1180 381 1187 383.5 1193.8 385.3 C1200 387 1207 388 1214 388.8 L1214 389 Z" fill="#5786d9" stroke="none"/><path d="M1052 389 L1052 365.4 C1060 367 1066 369 1070.8 369.2 C1073 368 1075 363 1077 352 C1080 335 1084 315 1087.4 311 C1089 310 1092 310.5 1093.8 311 C1100 312 1104 313 1106.7 314.7 C1110 317 1113 321 1116.9 326.9 C1121 333 1125 339 1129.7 344.9 C1135 351 1139 356 1143.8 360.3 C1152 366 1162 371 1173.3 377.6 C1180 381 1187 383.5 1193.8 385.3 C1200 387 1207 388 1214 388.8" fill="none" stroke="#6b7a90" stroke-width="1"/></svg>
<div class="r" style="left:1265px;top:314px;width:26.5px;height:75px;background:#5786d9;box-shadow:inset 1px 1px 0 #6b7a90;"></div>
<div class="r" style="left:1295px;top:360px;width:26.5px;height:29px;background:#5786d9;box-shadow:inset 1px 1px 0 #6b7a90;"></div>
<div class="r" style="left:1325px;top:385px;width:26.5px;height:4px;background:#5786d9;box-shadow:inset 1px 1px 0 #6b7a90;"></div>
<div class="r" style="left:1355px;top:387.2px;width:26.5px;height:1.8000000000000114px;background:#5786d9;box-shadow:inset 1px 1px 0 #6b7a90;"></div>
<div class="r" style="left:1385px;top:386.2px;width:26.5px;height:2.8000000000000114px;background:#5786d9;box-shadow:inset 1px 1px 0 #6b7a90;"></div>
<div class="r" style="left:1415px;top:388.3px;width:26.5px;height:0.6999999999999886px;background:#5786d9;box-shadow:inset 1px 1px 0 #6b7a90;"></div>
<div class="t" style="right:1207.00px;top:408.00px;font-size:12px;color:#5d6470;">2</div>
<div class="t" style="right:1207.00px;top:424.00px;font-size:12px;color:#5d6470;">712</div>
<div class="t" style="right:1207.00px;top:440.00px;font-size:12px;color:#5d6470;">0</div>
<div class="t" style="right:1207.00px;top:456.00px;font-size:12px;color:#5d6470;">1</div>
<div class="t" style="right:1207.00px;top:473.00px;font-size:12px;color:#5d6470;">0.404</div>
<div class="t" style="right:1207.00px;top:489.00px;font-size:12px;color:#5d6470;">0</div>
<div class="t" style="right:1207.00px;top:514.00px;font-size:12px;color:#5d6470;">0.491</div>
<div class="t" style="left:377.62px;top:408.00px;font-size:12px;color:#5d6470;letter-spacing:0.095px;">Unique</div>
<div class="t" style="right:987.00px;top:408.00px;font-size:12px;color:#5d6470;">3</div>
<div class="t" style="left:377.88px;top:424.00px;font-size:12px;color:#5d6470;letter-spacing:0.006px;">Count</div>
<div class="t" style="right:987.00px;top:424.00px;font-size:12px;color:#5d6470;">712</div>
<div class="t" style="left:597.62px;top:408.00px;font-size:12px;color:#5d6470;letter-spacing:0.095px;">Unique</div>
<div class="t" style="right:767.00px;top:408.00px;font-size:12px;color:#5d6470;">712</div>
<div class="t" style="left:597.88px;top:424.00px;font-size:12px;color:#5d6470;letter-spacing:0.006px;">Count</div>
<div class="t" style="right:767.00px;top:424.00px;font-size:12px;color:#5d6470;">712</div>
<div class="t" style="left:817.62px;top:408.00px;font-size:12px;color:#5d6470;letter-spacing:0.095px;">Unique</div>
<div class="t" style="right:547.00px;top:408.00px;font-size:12px;color:#5d6470;">2</div>
<div class="t" style="left:817.88px;top:424.00px;font-size:12px;color:#5d6470;letter-spacing:0.006px;">Count</div>
<div class="t" style="right:547.00px;top:424.00px;font-size:12px;color:#5d6470;">712</div>
<div class="t" style="left:1037.62px;top:408.00px;font-size:12px;color:#5d6470;letter-spacing:0.095px;">Unique</div>
<div class="t" style="right:327.00px;top:408.00px;font-size:12px;color:#5d6470;">88</div>
<div class="t" style="left:1037.88px;top:424.00px;font-size:12px;color:#5d6470;letter-spacing:0.006px;">Count</div>
<div class="t" style="right:327.00px;top:424.00px;font-size:12px;color:#5d6470;">712</div>
<div class="t" style="left:1037.50px;top:440.00px;font-size:12px;color:#5d6470;letter-spacing:0.487px;">Minimum</div>
<div class="t" style="right:327.00px;top:440.00px;font-size:12px;color:#5d6470;">0.42</div>
<div class="t" style="left:1037.50px;top:456.00px;font-size:12px;color:#5d6470;letter-spacing:0.258px;">Maximum</div>
<div class="t" style="right:327.00px;top:456.00px;font-size:12px;color:#5d6470;">80</div>
<div class="t" style="left:1037.50px;top:473.00px;font-size:12px;color:#5d6470;letter-spacing:0.250px;">Mean</div>
<div class="t" style="right:327.00px;top:473.00px;font-size:12px;color:#5d6470;">29.642</div>
<div class="t" style="left:1037.50px;top:489.00px;font-size:12px;color:#5d6470;letter-spacing:0.320px;">Median</div>
<div class="t" style="right:327.00px;top:489.00px;font-size:12px;color:#5d6470;">28</div>
<div class="t" style="left:1038.00px;top:506.00px;font-size:12px;color:#5d6470;letter-spacing:-0.182px;">Standard</div>
<div class="t" style="left:1037.50px;top:522.00px;font-size:12px;color:#5d6470;letter-spacing:0.169px;">Deviation</div>
<div class="t" style="right:327.00px;top:514.00px;font-size:12px;color:#5d6470;">14.493</div>
<div class="t" style="left:1257.62px;top:408.00px;font-size:12px;color:#5d6470;letter-spacing:0.095px;">Unique</div>
<div class="t" style="right:107.00px;top:408.00px;font-size:12px;color:#5d6470;">6</div>
<div class="t" style="left:1257.88px;top:424.00px;font-size:12px;color:#5d6470;letter-spacing:0.006px;">Count</div>
<div class="t" style="right:107.00px;top:424.00px;font-size:12px;color:#5d6470;">712</div>
<div class="r" style="left:255px;top:593px;width:1275px;height:1px;background:#f0efee;"></div>
<div class="r" style="left:255px;top:640px;width:1275px;height:1px;background:#f0efee;"></div>
<div class="r" style="left:255px;top:678px;width:1275px;height:1px;background:#f0efee;"></div>
<div class="r" style="left:255px;top:726px;width:1275px;height:1px;background:#f0efee;"></div>
<div class="r" style="left:255px;top:764px;width:1275px;height:1px;background:#f0efee;"></div>
<div class="r" style="left:255px;top:802px;width:1275px;height:1px;background:#f0efee;"></div>
<div class="r" style="left:365px;top:554px;width:1px;height:258px;background:#f0efee;"></div>
<div class="r" style="left:585px;top:554px;width:1px;height:258px;background:#f0efee;"></div>
<div class="r" style="left:805px;top:554px;width:1px;height:258px;background:#f0efee;"></div>
<div class="r" style="left:1025px;top:554px;width:1px;height:258px;background:#f0efee;"></div>
<div class="r" style="left:1245px;top:554px;width:1px;height:258px;background:#f0efee;"></div>
<div class="r" style="left:1465px;top:554px;width:1px;height:258px;background:#f0efee;"></div>
<div class="r" style="left:255px;top:554px;width:1275px;height:39px;background:#f2f2f2;"></div>
<div class="t" style="left:377.62px;top:569.00px;font-size:12px;color:#323130;letter-spacing:0.000px;">3</div>
<div class="t" style="left:597.40px;top:569.00px;font-size:12px;color:#323130;letter-spacing:-0.128px;">Braund, Mr. Owen Harris</div>
<div class="t" style="left:817.65px;top:569.00px;font-size:12px;color:#323130;letter-spacing:-0.178px;">male</div>
<div class="t" style="left:1037.38px;top:569.00px;font-size:12px;color:#323130;letter-spacing:-0.262px;">22</div>
<div class="t" style="left:1257.12px;top:569.00px;font-size:12px;color:#323130;letter-spacing:0.000px;">1</div>
<div class="t" style="left:377.12px;top:612.00px;font-size:12px;color:#323130;letter-spacing:0.000px;">1</div>
<div class="t" style="left:597.77px;top:604.00px;font-size:12px;color:#323130;letter-spacing:-0.130px;">Cumings, Mrs. John Bradley</div>
<div class="t" style="left:597.65px;top:619.00px;font-size:12px;color:#323130;letter-spacing:-0.123px;">(Florence Briggs Thayer)</div>
<div class="t" style="left:818.27px;top:612.00px;font-size:12px;color:#323130;letter-spacing:-0.153px;">female</div>
<div class="t" style="left:1037.62px;top:612.00px;font-size:12px;color:#323130;letter-spacing:-0.268px;">38</div>
<div class="t" style="left:1257.12px;top:612.00px;font-size:12px;color:#323130;letter-spacing:0.000px;">1</div>
<div class="t" style="left:377.62px;top:654.00px;font-size:12px;color:#323130;letter-spacing:0.000px;">3</div>
<div class="t" style="left:597.40px;top:654.00px;font-size:12px;color:#323130;letter-spacing:-0.123px;">Heikkinen, Miss. Laina</div>
<div class="t" style="left:818.27px;top:654.00px;font-size:12px;color:#323130;letter-spacing:-0.153px;">female</div>
<div class="t" style="left:1037.38px;top:654.00px;font-size:12px;color:#323130;letter-spacing:-0.262px;">26</div>
<div class="t" style="left:1257.62px;top:654.00px;font-size:12px;color:#323130;letter-spacing:0.000px;">0</div>
<div class="t" style="left:377.12px;top:697.00px;font-size:12px;color:#323130;letter-spacing:0.000px;">1</div>
<div class="t" style="left:597.40px;top:690.00px;font-size:12px;color:#323130;letter-spacing:-0.116px;">Futrelle, Mrs. Jacques Heath (Lily</div>
<div class="t" style="left:597.40px;top:705.00px;font-size:12px;color:#323130;letter-spacing:-0.141px;">May Peel)</div>
<div class="t" style="left:818.27px;top:697.00px;font-size:12px;color:#323130;letter-spacing:-0.153px;">female</div>
<div class="t" style="left:1037.62px;top:697.00px;font-size:12px;color:#323130;letter-spacing:-0.270px;">35</div>
<div class="t" style="left:1257.12px;top:697.00px;font-size:12px;color:#323130;letter-spacing:0.000px;">1</div>
<div class="t" style="left:377.62px;top:740.00px;font-size:12px;color:#323130;letter-spacing:0.000px;">3</div>
<div class="t" style="left:598.40px;top:740.00px;font-size:12px;color:#323130;letter-spacing:-0.120px;">Allen, Mr. William Henry</div>
<div class="t" style="left:817.65px;top:740.00px;font-size:12px;color:#323130;letter-spacing:-0.178px;">male</div>
<div class="t" style="left:1037.62px;top:740.00px;font-size:12px;color:#323130;letter-spacing:-0.270px;">35</div>
<div class="t" style="left:1257.62px;top:740.00px;font-size:12px;color:#323130;letter-spacing:0.000px;">0</div>
<div class="t" style="left:377.12px;top:778.00px;font-size:12px;color:#323130;letter-spacing:0.000px;">1</div>
<div class="t" style="left:597.40px;top:778.00px;font-size:12px;color:#323130;letter-spacing:-0.124px;">McCarthy, Mr. Timothy J</div>
<div class="t" style="left:817.65px;top:778.00px;font-size:12px;color:#323130;letter-spacing:-0.178px;">male</div>
<div class="t" style="left:1037.50px;top:778.00px;font-size:12px;color:#323130;letter-spacing:-0.270px;">54</div>
<div class="t" style="left:1257.62px;top:778.00px;font-size:12px;color:#323130;letter-spacing:0.000px;">0</div>
<svg class="r" style="left:640px;top:564px;overflow:visible;" width="8" height="17" viewBox="0.00 0.00 8 17" fill="none" stroke="#323130" stroke-width="1" stroke-linecap="round" stroke-linejoin="round"><path d="M1 0.8 C2.5 0.8 3.5 1.3 4 2 C4.5 1.3 5.5 0.8 7 0.8 M4 2 V14 M1 15.2 C2.5 15.2 3.5 14.7 4 14 C4.5 14.7 5.5 15.2 7 15.2" stroke="#fff" stroke-width="2.6"/><path d="M1 0.8 C2.5 0.8 3.5 1.3 4 2 C4.5 1.3 5.5 0.8 7 0.8 M4 2 V14 M1 15.2 C2.5 15.2 3.5 14.7 4 14 C4.5 14.7 5.5 15.2 7 15.2" stroke="#111" stroke-width="1.2"/></svg>
<div class="t" style="left:712.30px;top:846.00px;font-size:12px;color:#323130;letter-spacing:-0.237px;">Powered by <span style="text-decoration:underline">Kanaries Rath</span>.</div>
</body></html>
